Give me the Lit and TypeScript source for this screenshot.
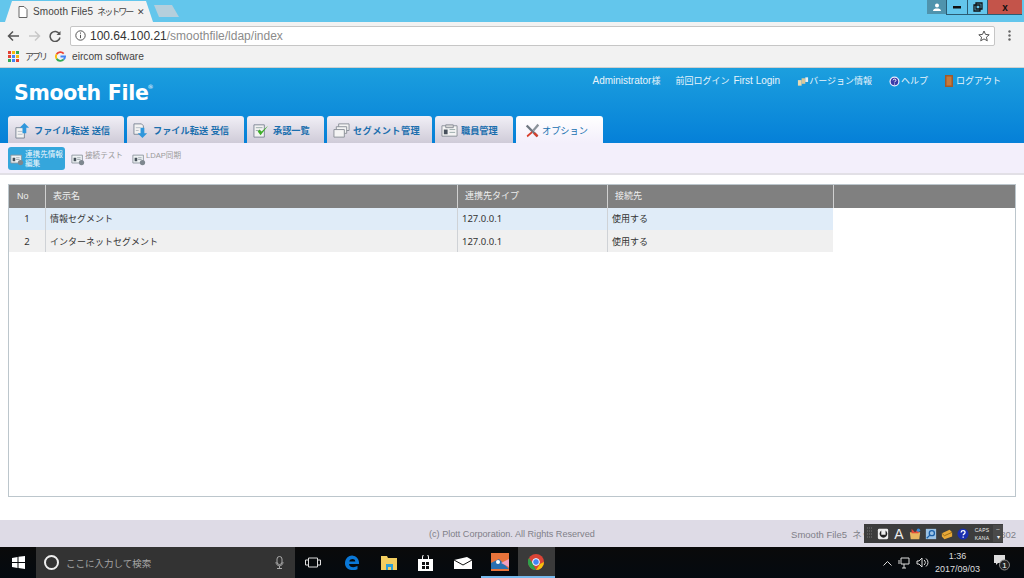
import { LitElement, html, css, svg } from "lit";
import { customElement } from "lit/decorators.js";

const icon = (kind: string) => {
  switch (kind) {
    case "send":
      return svg`<svg class="tabicon" viewBox="0 0 18 18"><path d="M2 6h7l2 2v9H2z" fill="#f2f2f2" stroke="#7d8796"/><path d="M4 10h5M4 13h5" stroke="#b5bcc5"/><path d="M11 1l5 5h-3v6H9V6H6z" fill="#2f97dc"/></svg>`;
    case "recv":
      return svg`<svg class="tabicon" viewBox="0 0 18 18"><path d="M1 2h8l2 2v9H1z" fill="#f2f2f2" stroke="#7d8796"/><path d="M3 6h5M3 9h3" stroke="#b5bcc5"/><path d="M10 17l5-5h-3V6H8v6H5z" fill="#2f97dc"/></svg>`;
    case "check":
      return svg`<svg class="tabicon" viewBox="0 0 18 18"><path d="M1 3h11v13H1z" fill="#f2f2f2" stroke="#7d8796"/><path d="M3 6h7M3 9h4" stroke="#9aa" /><path d="M5 10l3 4 8-10-7 6-2-2z" fill="#3fae2a"/></svg>`;
    case "seg":
      return svg`<svg class="tabicon" viewBox="0 0 18 18"><path d="M6 2h11v7H6z" fill="#f4f4f4" stroke="#8a8f98"/><path d="M3.500 5h11v7h-11z" fill="#f4f4f4" stroke="#8a8f98"/><path d="M1 8h11v8H1z" fill="#f4f4f4" stroke="#8a8f98"/></svg>`;
    case "staff":
      return svg`<svg class="tabicon" viewBox="0 0 18 18"><path d="M1 4h16v11H1z" fill="#f4f4f4" stroke="#8a8f98"/><path d="M5 3h8v3H5z" fill="#d8d8d8" stroke="#8a8f98"/><path d="M3 8h4v5H3z" fill="#47505c"/><path d="M9 8h6M9 11h6" stroke="#9aa"/></svg>`;
    case "tools":
      return svg`<svg class="tabicon" viewBox="0 0 18 18"><path d="M3 2l13 13-2 2L1 4z" fill="#6f7780"/><path d="M15 1l2 2-6 7-2-2z" fill="#8b929a"/><path d="M8 10l-6 5 1 2 6-5z" fill="#d8402c"/><path d="M12 11l4 4-2 2-4-4z" fill="#d8402c"/></svg>`;
    default:
      return svg`<svg class="subicon" viewBox="0 0 16 14"><path d="M1 2h12v9H1z" fill="#eef2f4" stroke="#8b949c"/><path d="M3 5h3v4H3z" fill="#46505a"/><path d="M7 5h4M7 7h4" stroke="#9aa4ac"/><circle cx="12" cy="10.500" r="3" fill="#7e878f"/></svg>`;
  }
};

@customElement("app-root")
export class AppRoot extends LitElement {
  static styles = css`
    :host {
      display: flex;
      flex-direction: column;
      position: relative;
      width: 1024px;
      height: 578px;
      overflow: hidden;
      background: #fff;
      font-family: "Liberation Sans", "Noto Sans CJK JP", sans-serif;
      font-size: 9px;
      color: #333;
    }
    svg { display: block; flex: none; }

    /* browser chrome */
    .strip { height: 22px; flex: none; background: #63c6ec; display: flex; align-items: flex-end; padding-left: 5px; }
    .btab {
      width: 148px; height: 21px; background: #f2f2f2; box-sizing: border-box;
      clip-path: polygon(0 100%, 7px 0, 141px 0, 100% 100%);
      display: flex; align-items: center; padding: 0 9px 0 13px; gap: 5px;
      font-size: 10px; color: #444; white-space: nowrap;
    }
    .btab .t { flex: 1; letter-spacing: .1px; }
    .btab .kana { font-size: 9px; letter-spacing: -2px; margin-left: 4px; }
    .btab .x { font-size: 9px; color: #444; }
    .newtab {
      width: 25px; height: 12px; margin: 0 0 5px 1px; background: #b5cfdc;
      clip-path: polygon(0 0, 18px 0, 100% 100%, 5px 100%);
    }
    .spacer { flex: 1; }
    .winbtns { align-self: flex-start; display: flex; height: 15px; margin-right: 2px; }
    .win { display: flex; align-items: center; justify-content: center; box-sizing: border-box; height: 15px; border-bottom: 1px solid #2b5c73; }
    .win.user { width: 19px; height: 14px; background: #4f93ad; border: 0; }
    .win.min { width: 21px; border-left: 1px solid #2b5c73; }
    .win.max { width: 20px; border-left: 1px solid #2b5c73; }
    .win.close { width: 35px; background: #c4544a; border-left: 1px solid #2b5c73; font-weight: bold; font-size: 10px; color: #111; }

    .toolbar { height: 24px; flex: none; box-sizing: border-box; background: #f2f2f2; display: flex; align-items: center; padding: 3px 13px 0 7px; }
    .nav { width: 21px; display: flex; justify-content: flex-start; }
    .omni {
      flex: 1; height: 20px; box-sizing: border-box; background: #fff;
      border: 1px solid #c6c6c6; border-radius: 2px; display: flex; align-items: center;
      padding: 0 4px; gap: 4px; font-size: 12px; color: #333; font-family: "Liberation Sans", sans-serif;
    }
    .omni .dim { color: #8b8b8b; }
    .url { flex: 1; }
    .dots { width: 16px; display: flex; justify-content: flex-end; }
    .bookmarks { height: 21px; flex: none; background: #f2f2f2; display: flex; align-items: center; padding-left: 8px; font-size: 10.200px; color: #444; border-bottom: 1px solid #d0d0d0; white-space: nowrap; }
    .grid { display: grid; grid-template-columns: repeat(3, 3px); gap: 1px; margin-right: 6px; width: 11px; }
    .grid i { width: 3px; height: 3px; display: block; }
    .apps { font-size: 9px; letter-spacing: -2px; width: 20px; }
    .g { margin: 0 6px 0 10px; }

    /* app header */
    .header { height: 75px; flex: none; background: linear-gradient(#1c9fde, #0580d8); display: flex; flex-direction: column; box-sizing: border-box; }
    .top { flex: 1; display: flex; justify-content: space-between; padding: 0 23px 0 14px; }
    .logo { font-family: "DejaVu Sans", sans-serif; font-weight: 700; font-size: 20.500px; color: #fff; margin-top: 12px; letter-spacing: -.3px; line-height: 26px; position: relative; height: 26px; white-space: nowrap; }
    .logo sup { position: absolute; font-size: 6px; top: 4px; right: -5px; line-height: 6px; font-weight: 400; letter-spacing: 0; }
    .links { display: flex; color: #e8f4fb; font-size: 9px; padding-top: 6px; align-items: flex-start; line-height: 14px; }
    .link { display: flex; align-items: center; gap: 1px; white-space: nowrap; margin-left: 17px; }
    .link .lat { font-size: 10px; }
    .link.admin { gap: 0; }
    .link.prev { margin-left: 15px; gap: 4px; }
    .link.version { gap: 0; }
    .tabs { display: flex; gap: 3px; height: 27px; padding-left: 8px; }
    .tab {
      box-sizing: border-box; height: 27px; border-radius: 3px 3px 0 0; padding-top: 1px;
      background: linear-gradient(#f1eff6, #cfcbd8); color: #1b6fae; font-size: 9.200px; font-weight: bold;
      display: flex; align-items: center; padding-left: 6px; gap: 3px; white-space: nowrap;
    }
    .tab.wide { letter-spacing: .4px; }
    .tab.on { background: linear-gradient(#fff, #f3effb); font-weight: normal; color: #1670b0; padding-left: 9px; gap: 2px; }
    .tabicon { width: 17px; height: 17px; }
    .tab.on .tabicon { width: 15px; height: 15px; }

    /* sub toolbar */
    .sub { height: 32px; flex: none; box-sizing: border-box; background: #f3effb; border-bottom: 2px solid #e2e0e6; display: flex; padding: 4px 0 0 8px; align-items: flex-start; }
    .sbtn { display: flex; gap: 0; color: #9a9a9a; font-size: 7.600px; line-height: 9px; height: 23px; padding: 3px 0 0 0; box-sizing: border-box; white-space: nowrap; }
    .sbtn .subicon { width: 14px; height: 13px; margin-top: 3px; }
    .sbtn.on { background: #35a6dc; color: #eef8fc; border-radius: 3px; width: 57px; padding-left: 2px; gap: 1px; margin-right: 6px; }
    .sbtn.on .lab { padding-top: 0; }
    .sbtn.second { width: 61px; }
    .sbtn .lab { padding-top: 1px; }

    /* content */
    .content { flex: 1; background: #fff; padding: 9px 8px 23px; box-sizing: border-box; display: flex; min-height: 0; }
    .panel { flex: 1; border: 1px solid #bcc6cc; box-sizing: border-box; display: flex; flex-direction: column; }
    .row { display: grid; grid-template-columns: 36px 412px 150px 226px; height: 22px; align-items: center; color: #333; font-size: 9px; width: 824px; }
    .row > div { height: 100%; display: flex; align-items: center; padding-left: 4px; box-sizing: border-box; border-left: 1px solid #cfd2d6; padding-bottom: 1px; }
    .row > div:first-child { border-left: 0; justify-content: center; padding-left: 0; }
    .row .num { font-family: "Noto Sans", sans-serif; font-size: 9.500px; }
    .row.a { background: #e0ecf8; }
    .row.b { background: #f0f0f0; }
    .row.b > div { padding-bottom: 0; }
    .row.head { background: #808080; color: #eee; height: 23px; width: auto; grid-template-columns: 36px 412px 150px 226px 1fr; }
    .row.head > div { padding-left: 7px; border-left: 1px solid #d0d0d0; padding-bottom: 2px; }
    .row.head > div:first-child { padding-left: 8px; border-left: 0; justify-content: flex-start; }

    /* footer */
    .footer { height: 27px; flex: none; background: #dedbe6; color: #807f88; display: flex; align-items: center; font-size: 9.100px; white-space: nowrap; }
    .copy { margin-left: 429px; }
    .ver { margin-left: auto; margin-right: 8px; font-size: 9.500px; }

    /* taskbar */
    .task { height: 31px; flex: none; background: linear-gradient(#0a0a0a, #040a10); display: flex; align-items: stretch; color: #ddd; }
    .start { width: 36px; display: flex; align-items: center; justify-content: center; }
    .search { width: 259px; background: #333; display: flex; align-items: center; padding: 0 11px 0 7px; box-sizing: border-box; color: #a5a5a5; font-size: 9.500px; gap: 6px; }
    .search .q { flex: 1; }
    .ti { width: 36.800px; display: flex; align-items: center; justify-content: center; box-sizing: border-box; }
    .ti.tv { width: 39px; padding-right: 3px; }
    .ti.open { border-bottom: 2px solid #76b9ed; }
    .ti.active { background: #3a3a3a; border-bottom: 2px solid #76b9ed; }
    .tray { margin-left: auto; display: flex; align-items: center; gap: 6px; padding-right: 14px; }
    .clock { text-align: center; font-size: 9px; line-height: 13px; color: #ddd; margin-right: 7px; }

    /* IME bar floating over footer */
    .ime { position: absolute; left: 864px; top: 524px; width: 139px; height: 19px; background: #3d3d3d; display: flex; align-items: center; gap: 4px; padding-left: 3px; box-sizing: border-box; color: #eee; }
    .ime svg.ic { width: 12px; height: 12px; }
    .ime .capt { font-size: 5px; line-height: 8px; text-align: center; width: 18px; letter-spacing: .2px; }
    .ime .A { font-size: 14px; width: 12px; text-align: center; line-height: 16px; }
    .ime .side { font-size: 6px; line-height: 8px; text-align: center; width: 10px; height: 17px; background: #4a4a4a; margin-left: -2px; }
  `;

  render() {
    const colors = ["#e34133","#f6b80c","#34a853","#e34133","#4285f4","#f6b80c","#34a853","#4285f4","#e34133"];
    return html`
      <div class="strip">
        <div class="btab">
          <svg width="10" height="12" viewBox="0 0 10 12"><path d="M1 .5h5l3 3v8H1z" fill="#fff" stroke="#666"/></svg>
          <span class="t">Smooth File5<span class="kana">ネットワー</span></span><span class="x">✕</span>
        </div>
        <div class="newtab"></div>
        <div class="spacer"></div>
        <div class="winbtns">
          <div class="win user"><svg width="10" height="9" viewBox="0 0 10 9"><circle cx="5" cy="2.500" r="2" fill="#fff"/><path d="M1 8c0-2 2-2.500 4-2.500S9 6 9 8z" fill="#fff"/></svg></div>
          <div class="win min"><svg width="9" height="3"><rect width="8" height="2.500" fill="#111"/></svg></div>
          <div class="win max"><svg width="10" height="10" viewBox="0 0 10 10"><path d="M3 1h6v6H3zM1 3h6v6H1z" fill="none" stroke="#111" stroke-width="1.300"/></svg></div>
          <div class="win close">x</div>
        </div>
      </div>

      <div class="toolbar">
        <div class="nav"><svg width="13" height="12" viewBox="0 0 13 12"><path d="M12 6H2M6 1.500 1.500 6 6 10.500" fill="none" stroke="#555" stroke-width="1.500"/></svg></div>
        <div class="nav"><svg width="13" height="12" viewBox="0 0 13 12"><path d="M1 6h10M7 1.500 11.500 6 7 10.500" fill="none" stroke="#c8c8c8" stroke-width="1.500"/></svg></div>
        <div class="nav"><svg width="13" height="12" viewBox="0 0 13 12"><path d="M10.500 4A5 5 0 1 0 11 7.500" fill="none" stroke="#555" stroke-width="1.500"/><path d="M11.500 1v4h-4z" fill="#555"/></svg></div>
        <div class="omni">
          <svg width="11" height="11" viewBox="0 0 11 11"><circle cx="5.500" cy="5.500" r="4.700" fill="none" stroke="#555"/><path d="M5.500 4.800v3.400M5.500 2.500v1.200" stroke="#555"/></svg>
          <span class="url">100.64.100.21<span class="dim">/smoothfile/ldap/index</span></span>
          <svg width="12" height="12" viewBox="0 0 12 12"><path d="M6 1l1.500 3.400 3.700.4-2.800 2.400.9 3.600L6 8.900 2.700 10.800l.9-3.600L.8 4.800l3.700-.4z" fill="none" stroke="#555"/></svg>
        </div>
        <div class="dots"><svg width="3" height="11"><circle cx="1.500" cy="1.500" r="1.200" fill="#666"/><circle cx="1.500" cy="5.500" r="1.200" fill="#666"/><circle cx="1.500" cy="9.500" r="1.200" fill="#666"/></svg></div>
      </div>

      <div class="bookmarks">
        <div class="grid">${colors.map((c) => html`<i style="background:${c}"></i>`)}</div>
        <span class="apps">アプリ</span>
        <svg class="g" width="11" height="11" viewBox="0 0 12 12">
          <path d="M9.500 2.800A5 5 0 0 0 1.800 3.400" fill="none" stroke="#ea4335" stroke-width="2"/>
          <path d="M1.800 3.400A5 5 0 0 0 1.800 8.600" fill="none" stroke="#fbbc05" stroke-width="2"/>
          <path d="M1.800 8.600A5 5 0 0 0 9.500 9.200" fill="none" stroke="#34a853" stroke-width="2"/>
          <path d="M9.500 9.200A5 5 0 0 0 11 6H6" fill="none" stroke="#4285f4" stroke-width="2"/>
        </svg>
        <span>eircom software</span>
      </div>

      <div class="header">
        <div class="top">
          <div class="logo">Smooth File<sup>®</sup></div>
          <div class="links">
            <span class="link admin"><span class="lat">Administrator</span>様</span>
            <span class="link prev">前回ログイン<span class="lat">First Login</span></span>
            <span class="link version"><svg width="12" height="11" viewBox="0 0 13 11"><path d="M1 4h4v6H1z" fill="#e9d9b0"/><path d="M5 2h4v6H5z" fill="#d8c79a"/><path d="M9 1h3v5H9z" fill="#eee"/></svg>バージョン情報</span>
            <span class="link"><svg width="11" height="11" viewBox="0 0 11 11"><circle cx="5.500" cy="5.500" r="5" fill="#eef"/><circle cx="5.500" cy="5.500" r="3.800" fill="#3a3aa8"/><path d="M4 4.300c.2-1.600 3-1.600 3 0 0 1-1.400 1-1.400 2M5.600 7.500v1" stroke="#fff" fill="none"/></svg>ヘルプ</span>
            <span class="link"><svg width="10" height="13" viewBox="0 0 10 13"><path d="M0 0h8v12H0z" fill="#a0592a"/><path d="M1.500 1.500h5v9h-5z" fill="#c47a3e"/><path d="M8 11h2" stroke="#39c" /></svg>ログアウト</span>
          </div>
        </div>
        <div class="tabs">
          <div class="tab" style="width:116px">${icon("send")}ファイル転送 送信</div>
          <div class="tab" style="width:117px">${icon("recv")}ファイル転送 受信</div>
          <div class="tab" style="width:77px">${icon("check")}承認一覧</div>
          <div class="tab wide" style="width:105px">${icon("seg")}セグメント管理</div>
          <div class="tab" style="width:78px">${icon("staff")}職員管理</div>
          <div class="tab on" style="width:87px">${icon("tools")}オプション</div>
        </div>
      </div>

      <div class="sub">
        <div class="sbtn on">${icon("")}<span class="lab">連携先情報<br />編集</span></div>
        <div class="sbtn second">${icon("")}<span class="lab">接続テスト</span></div>
        <div class="sbtn">${icon("")}<span class="lab">LDAP同期</span></div>
      </div>

      <div class="content">
        <div class="panel">
          <div class="row head"><div>No</div><div>表示名</div><div>連携先タイプ</div><div>接続先</div><div></div></div>
          <div class="row a"><div class="num">1</div><div>情報セグメント</div><div class="num">127.0.0.1</div><div>使用する</div></div>
          <div class="row b"><div class="num">2</div><div>インターネットセグメント</div><div class="num">127.0.0.1</div><div>使用する</div></div>
        </div>
      </div>

      <div class="footer">
        <span class="copy">(c) Plott Corporation. All Rights Reserved</span>
        <span class="ver">Smooth File5 &nbsp;ネットワーク分離モデル Ver 5.2.0.802</span>
      </div>

      <div class="task">
        <div class="start"><svg width="13" height="13" viewBox="0 0 13 13"><path d="M0 2l5.500-1v5H0zM6.500.8 13 0v6H6.500zM0 7h5.500v5L0 11zM6.500 7H13v6l-6.500-1z" fill="#fff"/></svg></div>
        <div class="search">
          <svg width="17" height="17" viewBox="0 0 17 17"><circle cx="8.500" cy="8.500" r="6.500" fill="none" stroke="#eee" stroke-width="2"/></svg>
          <span class="q">ここに入力して検索</span>
          <svg width="9" height="13" viewBox="0 0 9 13"><rect x="2" y="0.500" width="5" height="8" rx="2.500" fill="none" stroke="#aaa"/><path d="M1 6c0 5 7 5 7 0M4.500 10v2.500M2 12.500h5" fill="none" stroke="#aaa"/></svg>
        </div>
        <div class="ti tv"><svg width="16" height="11" viewBox="0 0 16 11"><path d="M3.500 1h9v9h-9zM.5 3h3v5h-3zM12.500 3h3v5h-3z" fill="none" stroke="#ddd"/></svg></div>
        <div class="ti"><svg width="16" height="16" viewBox="0 0 16 16"><path d="M15 9H5c.3 3.500 5 4 8.500 2v3.200C8 16.500 1 14.300 1 8.500 1 3 5.500 0 9 .7 13 1.300 15.500 5 15 9zM5.300 6.500h6C11 3.300 6 3.300 5.300 6.500z" fill="#0a78d7"/></svg></div>
        <div class="ti"><svg width="17" height="14" viewBox="0 0 17 14"><path d="M0 0h6l1 2h9v12H0z" fill="#f3ce60"/><path d="M5 8h7v6h-2v-3H7v3H5z" fill="#2c9fd8"/></svg></div>
        <div class="ti"><svg width="15" height="16" viewBox="0 0 15 16"><path d="M0 4h15v12H0z" fill="#fff"/><path d="M4.500 4V2a3 3 0 0 1 6 0v2" fill="none" stroke="#fff"/><path d="M4 7h3v3H4zM8 7h3v3H8zM4 11h3v3H4zM8 11h3v3H8z" fill="#111"/></svg></div>
        <div class="ti"><svg width="18" height="12" viewBox="0 0 18 12"><path d="M0 3 13 0l5 3v9H0z" fill="#fff"/><path d="M0 3l9 5 9-5" fill="none" stroke="#111"/></svg></div>
        <div class="ti open"><svg width="18" height="18" viewBox="0 0 18 18"><rect width="18" height="18" fill="#e8733a"/><path d="M0 10 8 6l10 10H0z" fill="#2a6fb0"/><path d="M10 10l8-4v8z" fill="#f0a0c0"/><circle cx="7" cy="9" r="2" fill="#fff"/></svg></div>
        <div class="ti active"><svg width="16" height="16" viewBox="0 0 16 16"><circle cx="8" cy="8" r="8" fill="#db4437"/><path d="M8 16A8 8 0 0 1 1 4l4 6z" fill="#2ea04a"/><path d="M16 8a8 8 0 0 1-8 8l4-6z" fill="#f6c10c"/><circle cx="8" cy="8" r="3.400" fill="#4285f4" stroke="#fff"/></svg></div>
        <div class="tray">
          <svg width="9" height="6" viewBox="0 0 9 6"><path d="M.5 5.500l4-4 4 4" fill="none" stroke="#ddd"/></svg>
          <svg width="12" height="12" viewBox="0 0 12 12"><path d="M3 1h8v6H3zM6 7v4M4 11h4M1 3v4" fill="none" stroke="#ddd"/></svg>
          <svg width="13" height="11" viewBox="0 0 13 11"><path d="M1 4h2l3-3v9L3 7H1z" fill="none" stroke="#ddd"/><path d="M8 3a3 3 0 0 1 0 5M10 1.500a5 5 0 0 1 0 8" fill="none" stroke="#ddd"/></svg>
          <div class="clock">1:36<br />2017/09/03</div>
          <svg width="17" height="17" viewBox="0 0 17 17"><path d="M1 1h11v8H5L3 11V9H1z" fill="#ddd"/><circle cx="11.500" cy="11" r="5" fill="#222" stroke="#888"/><text x="11.500" y="14" font-size="8" text-anchor="middle" fill="#fff">1</text></svg>
        </div>
      </div>

      <div class="ime">
        <svg width="6" height="13" viewBox="0 0 6 13"><path d="M0 1h6M0 4h6M0 7h6M0 10h6" stroke="#777" stroke-dasharray="1 1"/></svg>
        <svg class="ic" viewBox="0 0 14 14"><rect x="1" y="1" width="12" height="12" rx="1.500" fill="#eee"/><path d="M5 3a4.500 4.500 0 1 0 5 0v5H5z" fill="#222"/></svg>
        <span class="A">A</span>
        <svg class="ic" viewBox="0 0 14 14"><path d="M1 5h12l-1 8H2z" fill="#e8b560"/><path d="M3 1l4 4 5-4-1 5H3z" fill="#e04a3a"/><circle cx="11" cy="2.500" r="2" fill="#3a8fdd"/></svg>
        <svg class="ic" viewBox="0 0 14 14"><rect x="1" y="1" width="12" height="12" fill="#9cc3e6"/><circle cx="8" cy="6" r="3" fill="none" stroke="#1a5fa8" stroke-width="1.500"/><path d="M6 8l-4 4" stroke="#1a5fa8" stroke-width="1.500"/></svg>
        <svg class="ic" viewBox="0 0 14 14"><path d="M1 6l9-4 3 3v5l-9 3-3-3z" fill="#e8a838"/><path d="M1 6l3 3 9-4" fill="none" stroke="#8f6514"/></svg>
        <svg class="ic" viewBox="0 0 14 14"><circle cx="7" cy="7" r="6.500" fill="#1a2fb0"/><path d="M4.800 5.200c.2-2.800 4.600-2.800 4.600 0 0 1.700-2.200 1.600-2.200 3.300M7.200 10v1.500" stroke="#fff" stroke-width="1.500" fill="none"/></svg>
        <span class="capt">CAPS<br />KANA</span>
        <span class="side">–<br />▾</span>
      </div>
    `;
  }
}
